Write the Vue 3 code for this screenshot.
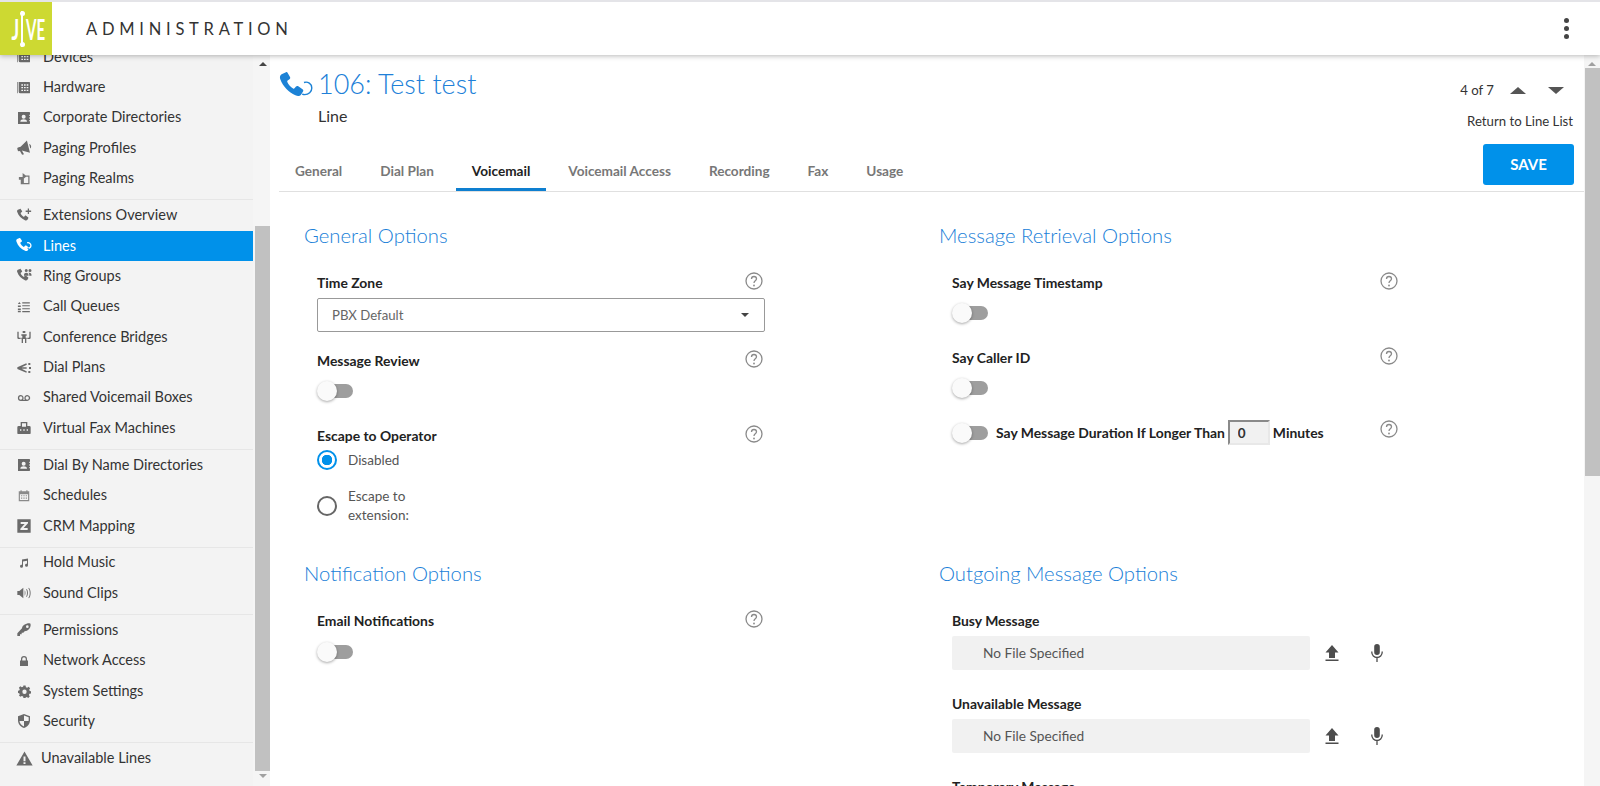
<template>
  <div class="app">
    <header class="topbar">
      <div class="logo">
        <span class="logo-j">J</span>
        <span class="logo-bar"></span>
        <span class="logo-ve">VE</span>
      </div>
      <div class="app-title">ADMINISTRATION</div>
      <div class="kebab"><span></span><span></span><span></span></div>
    </header>

    <div class="layout">
      <aside class="sidebar">
        <nav class="side-list">
          <div v-for="(group, i) in navGroups" :key="i" class="side-group">
            <a
              v-for="item in group"
              :key="item.label"
              class="side-item"
              :class="{ active: item.active, warn: item.icon === 'warning' }"
            >
              <span class="icon-box">
                <svg class="side-icon" :class="'i-' + item.icon" viewBox="0 0 24 24">
                  <path :d="icons[item.icon]" fill="currentColor" fill-rule="evenodd" />
                </svg>
              </span>
              <span class="side-label">{{ item.label }}</span>
            </a>
          </div>
        </nav>
      </aside>
      <div class="scrollbar side-scroll">
        <span class="arrow up"></span>
        <span class="thumb"></span>
        <span class="arrow down"></span>
      </div>

      <main class="main">
        <div class="page-top">
          <div class="page-title">
            <svg class="title-icon" viewBox="0 0 34 28">
              <path d="M7 1.200 2.600 3.200C.8 4.200.6 6.400 1.300 8.300 4 15.500 9.800 21.600 17 24.600c2 .8 4 .4 5.200-1.200l1.800-2.800c.5-.9.300-1.800-.5-2.400l-4.200-3c-.8-.5-1.700-.4-2.300.3l-1.500 1.800c-.4.400-.9.500-1.400.2-2.400-1.500-4.600-3.900-5.800-6.500-.2-.5-.1-1 .3-1.400l1.900-1.400c.7-.6.900-1.500.5-2.300L8.700 1.900C8.300 1.100 7.700 1 7 1.200z" fill="currentColor" />
              <path d="M25 11.500c3.800-1.400 7.800 1.400 7.800 5.400 0 4-3.300 6.700-7 6.700-1 0-1.800-.2-2.600-.5" fill="none" stroke="currentColor" stroke-width="1.400" />
            </svg>
            <div>
              <h1>106: Test test</h1>
              <div class="subtitle">Line</div>
            </div>
          </div>
          <div class="pager-box">
            <div class="pager">
              <span>4 of 7</span>
              <span class="tri tri-up"></span>
              <span class="tri tri-down"></span>
            </div>
            <a class="return-link">Return to Line List</a>
          </div>
        </div>

        <div class="tab-row">
          <div class="tabs">
            <a v-for="tab in tabs" :key="tab" class="tab" :class="{ active: tab === 'Voicemail' }">{{ tab }}</a>
          </div>
          <button class="save" type="button">SAVE</button>
        </div>

        <div class="content">
          <section class="section">
            <h2>General Options</h2>
            <div class="field-head first"><label>Time Zone</label><svg class="help" viewBox="0 0 18 18"><circle cx="9" cy="9" r="8" /><path d="M6.500 7c0-1.500 1.100-2.500 2.500-2.500s2.500 1 2.500 2.300c0 2-2.500 2-2.500 4.200" /><circle class="dot" cx="9" cy="13.500" r=".9" /></svg></div>
            <div class="select">
              <span>PBX Default</span>
              <span class="select-caret"></span>
            </div>
            <div class="field-head gap"><label>Message Review</label><svg class="help" viewBox="0 0 18 18"><circle cx="9" cy="9" r="8" /><path d="M6.500 7c0-1.500 1.100-2.500 2.500-2.500s2.500 1 2.500 2.300c0 2-2.500 2-2.500 4.200" /><circle class="dot" cx="9" cy="13.500" r=".9" /></svg></div>
            <div class="toggle below"><span class="knob"></span></div>
            <div class="field-head after-toggle"><label>Escape to Operator</label><svg class="help" viewBox="0 0 18 18"><circle cx="9" cy="9" r="8" /><path d="M6.500 7c0-1.500 1.100-2.500 2.500-2.500s2.500 1 2.500 2.300c0 2-2.500 2-2.500 4.200" /><circle class="dot" cx="9" cy="13.500" r=".9" /></svg></div>
            <div class="radio-row one">
              <span class="radio checked"></span>
              <span class="radio-label">Disabled</span>
            </div>
            <div class="radio-row two">
              <span class="radio"></span>
              <span class="radio-label">Escape to<br />extension:</span>
            </div>
          </section>

          <section class="section">
            <h2>Message Retrieval Options</h2>
            <div class="field-head first"><label>Say Message Timestamp</label><svg class="help" viewBox="0 0 18 18"><circle cx="9" cy="9" r="8" /><path d="M6.500 7c0-1.500 1.100-2.500 2.500-2.500s2.500 1 2.500 2.300c0 2-2.500 2-2.500 4.200" /><circle class="dot" cx="9" cy="13.500" r=".9" /></svg></div>
            <div class="toggle below"><span class="knob"></span></div>
            <div class="field-head after-toggle"><label>Say Caller ID</label><svg class="help" viewBox="0 0 18 18"><circle cx="9" cy="9" r="8" /><path d="M6.500 7c0-1.500 1.100-2.500 2.500-2.500s2.500 1 2.500 2.300c0 2-2.500 2-2.500 4.200" /><circle class="dot" cx="9" cy="13.500" r=".9" /></svg></div>
            <div class="toggle below"><span class="knob"></span></div>
            <div class="duration-row">
              <div class="toggle"><span class="knob"></span></div>
              <label>Say Message Duration If Longer Than</label>
              <input class="num" type="text" value="0" />
              <label>Minutes</label>
              <svg class="help push" viewBox="0 0 18 18"><circle cx="9" cy="9" r="8" /><path d="M6.500 7c0-1.500 1.100-2.500 2.500-2.500s2.500 1 2.500 2.300c0 2-2.500 2-2.500 4.200" /><circle class="dot" cx="9" cy="13.500" r=".9" /></svg>
            </div>
          </section>

          <section class="section">
            <h2>Notification Options</h2>
            <div class="field-head first"><label>Email Notifications</label><svg class="help" viewBox="0 0 18 18"><circle cx="9" cy="9" r="8" /><path d="M6.500 7c0-1.500 1.100-2.500 2.500-2.500s2.500 1 2.500 2.300c0 2-2.500 2-2.500 4.200" /><circle class="dot" cx="9" cy="13.500" r=".9" /></svg></div>
            <div class="toggle below email"><span class="knob"></span></div>
          </section>

          <section class="section">
            <h2>Outgoing Message Options</h2>
            <template v-for="(msg, i) in messages" :key="msg">
              <div class="field-head" :class="{ first: i === 0 }"><label>{{ msg }}</label></div>
              <div class="file-row">
                <div class="file-box">No File Specified</div>
                <svg class="file-icon upload" viewBox="0 0 16 18"><path d="M8 1 1.500 8.500H5V14h6V8.500h3.500zM1.500 15.400h13V17h-13z" fill="currentColor" /></svg>
                <svg class="file-icon mic" viewBox="0 0 16 18"><path d="M8 0a2.800 2.800 0 0 0-2.800 2.800v5.400a2.800 2.800 0 0 0 5.600 0V2.800A2.800 2.800 0 0 0 8 0z" fill="currentColor" /><path d="M2.800 7.500v.8A5.200 5.200 0 0 0 8 13.500a5.200 5.200 0 0 0 5.200-5.200v-.8M8 13.500V18" fill="none" stroke="currentColor" stroke-width="1.300" /></svg>
              </div>
            </template>
          </section>
        </div>
      </main>
      <div class="scrollbar main-scroll">
        <span class="arrow up"></span>
        <span class="thumb"></span>
      </div>
    </div>
  </div>
</template>

<script setup>
const book = 'M4 3h16a1 1 0 0 1 1 1v15a1 1 0 0 1-1 1H6.500A2.500 2.500 0 0 1 4 17.500zM8 6.500v2h2.500v-2zm4 0v2h2.500v-2zm4 0v2h2.500v-2zM8 10.500v2h2.500v-2zm4 0v2h2.500v-2zm4 0v2h2.500v-2zM8 14.500v2h2.500v-2zm4 0v2h2.500v-2zm4 0v2h2.500v-2zM2 3h1v17H2z'
const contact = 'M3 3h17a1 1 0 0 1 1 1v3h-1v2h1v2h-1v2h1v2h-1v2h1v3a1 1 0 0 1-1 1H3zM11.500 7a3 3 0 1 0 0 6 3 3 0 0 0 0-6zm-5 10.500h10c0-2.500-2.500-3.500-5-3.500s-5 1-5 3.500z'
const handset = 'M6.600 2.500 3.800 3.600C2.700 4.200 2.500 5.500 3 6.800c1.700 5 5.500 9 10.300 11 1.300.5 2.600.3 3.300-.8l1.100-1.900c.3-.6.200-1.200-.3-1.600l-2.700-2c-.5-.4-1.100-.3-1.500.2l-1 1.200c-.3.3-.6.300-.9.100-1.600-1-2.900-2.600-3.700-4.300-.1-.3 0-.7.200-.9l1.300-1c.5-.4.600-1 .3-1.500L7.700 3c-.3-.5-.7-.6-1.100-.5z'

const icons = {
  book,
  contact,
  megaphone: 'M19 2 7.500 9H3.500A1.500 1.500 0 0 0 2 10.500v3A1.500 1.500 0 0 0 3.500 15H5l1.800 6h3L8 15l11 6zm2 6v7c1.500-.7 2-2.200 2-3.500S22.500 8.700 21 8z',
  realm: 'M9 9.500V3l5 4h6v14H6v-7H3V9.500zm2 5v4.500h7V9h-3.500L11 12v2.500z',
  phonePlus: handset + 'M17 2h1.700v2.800h2.800v1.700h-2.800v2.800H17V6.500h-2.800V4.800H17z',
  phone: handset + 'M15.500 7.500a4.200 4.200 0 0 1 5.600 3.900c0 2.600-2.200 4.600-4.800 4.300v-1.600c1.700.3 3.200-1 3.200-2.700 0-1.900-1.900-3.200-3.600-2.500z',
  phoneGroup: handset + 'M15 2.500a2 2 0 1 1 0 4 2 2 0 0 1 0-4zm5 0a2 2 0 1 1 0 4 2 2 0 0 1 0-4zm-8 8c0-2 1.500-3 3-3s3 1 3 3v1h-6zm7-3c1.500 0 3 1 3 3v1h-3v-1c0-1-.3-2.200-1-2.900.3-.1.600-.1 1-.1z',
  queue: 'M4 3.500 6.500 7h-5zM9 4h13v1.800H9zM9 9h13v1.800H9zM1.500 9.500h5V12h-5zM9 14h13v1.800H9zM1.500 14.500h5V17h-5zM9 19h13v1.800H9zM1.500 18.500h5V21h-5z',
  conference: 'M2 4h2v8c0 .5.500 1 1 1h3v2H4c-1 0-2-1-2-2zm20 0v9c0 1-1 2-2 2h-4v-2h3c.5 0 1-.5 1-1V4zM8 8h8v2h-1.500v3H17v2h-1.500v6h-2v-6h-3v6h-2v-6H7v-2h2.500v-3H8zM10 3h4v3h-4z',
  share: 'M2 10.800 15.500 5l.8 2L8.500 11h7.500v2.200H8.500l7.800 4-.8 2L2 13.400zM18.500 4.500h3v3h-3zM19.500 10.500h3v3h-3zM18.500 16.500h3v3h-3z',
  voicemail: 'M6.500 7a5 5 0 0 1 3.900 8h3.200a5 5 0 1 1 3.900 2h-11a5 5 0 0 1 0-10zm0 2.200a2.800 2.800 0 1 0 0 5.600 2.800 2.800 0 0 0 0-5.600zm11 0a2.800 2.800 0 1 0 0 5.600 2.800 2.800 0 0 0 0-5.600z',
  fax: 'M7 3h10v6h3a2 2 0 0 1 2 2v9a1 1 0 0 1-1 1H3a1 1 0 0 1-1-1v-9a2 2 0 0 1 2-2h3zm2 2v5h6V5zM6 14v2h2v-2zm5 0v2h2v-2zm5 0v2h2v-2z',
  calendar: 'M6 2h2v2h8V2h2v2h3v17H3V4h3zM5 9v10h14V9zm2 1.500h2v2H7zm4 0h2v2h-2zm4 0h2v2h-2zM7 14.500h2v2H7zm4 0h2v2h-2zm4 0h2v2h-2z',
  zbox: 'M2 2h20v20H2zm5 4v3h6l-6.500 7V18h11v-3h-6l6.500-7V6z',
  music: 'M8 5 20 3v13.500a3 3 0 1 1-2-2.800V7.500l-8 1.300v9.700a3 3 0 1 1-2-2.800z',
  sound: 'M2 9h3l6-5v16l-6-5H2zM13 8c1.500 1 1.500 7 0 8zM16 6c2.500 2 2.500 10 0 12l-.8-.8c1.800-2 1.800-8.400 0-10.400zM19.300 4c3.500 3 3.500 13 0 16l-.8-.8c2.800-3 2.800-11.400 0-14.400z',
  key: 'M20 2a2 2 0 0 1 2 2c0 5.500-4 9.500-9 9.700L11 16H8.500v2.500H6V21H2v-4l7-7.500C9.500 5.500 14 2 20 2zm-3 3a2 2 0 1 0 0 4 2 2 0 0 0 0-4z',
  lock: 'M12 2a6 6 0 0 1 6 6v3h2v11H4V11h2V8a6 6 0 0 1 6-6zm0 2.500A3.500 3.500 0 0 0 8.500 8v3h7V8A3.500 3.500 0 0 0 12 4.500z',
  gear: 'M10 1h4l.6 3 2.400 1 2.600-1.700 2.800 2.800L20.700 8.700l1 2.300 2.300.6v4l-2.900.5-1 2.400 1.600 2.600-2.800 2.800-2.600-1.700-2.300 1L14 24h-4l-.6-2.800-2.400-1-2.600 1.700-2.800-2.800L3.300 17.500l-1-2.400L0 14.600v-4l2.300-.6 1-2.300L1.600 5.100l2.800-2.800L7 4l2.400-1zM12 8.500a4 4 0 1 0 0 8 4 4 0 0 0 0-8z',
  shield: 'M12 1.500 21 5v6c0 5.500-3.500 9.700-9 11.500C6.500 20.700 3 16.500 3 11V5zm0 2.300V12H5.200c.4 3.900 3 6.800 6.800 8.200V12h6.800c.1-.3.200-.7.200-1V6.400z',
  warning: 'M12 2 23.500 22H.5zm-1.400 7v7h2.800V9zm0 8.300v2.500h2.800v-2.500z',
}

const navGroups = [
  [
    { label: 'Devices', icon: 'book' },
    { label: 'Hardware', icon: 'book' },
    { label: 'Corporate Directories', icon: 'contact' },
    { label: 'Paging Profiles', icon: 'megaphone' },
    { label: 'Paging Realms', icon: 'realm' },
  ],
  [
    { label: 'Extensions Overview', icon: 'phonePlus' },
    { label: 'Lines', icon: 'phone', active: true },
    { label: 'Ring Groups', icon: 'phoneGroup' },
    { label: 'Call Queues', icon: 'queue' },
    { label: 'Conference Bridges', icon: 'conference' },
    { label: 'Dial Plans', icon: 'share' },
    { label: 'Shared Voicemail Boxes', icon: 'voicemail' },
    { label: 'Virtual Fax Machines', icon: 'fax' },
  ],
  [
    { label: 'Dial By Name Directories', icon: 'contact' },
    { label: 'Schedules', icon: 'calendar' },
    { label: 'CRM Mapping', icon: 'zbox' },
  ],
  [
    { label: 'Hold Music', icon: 'music' },
    { label: 'Sound Clips', icon: 'sound' },
  ],
  [
    { label: 'Permissions', icon: 'key' },
    { label: 'Network Access', icon: 'lock' },
    { label: 'System Settings', icon: 'gear' },
    { label: 'Security', icon: 'shield' },
  ],
  [{ label: 'Unavailable Lines', icon: 'warning' }],
]

const tabs = ['General', 'Dial Plan', 'Voicemail', 'Voicemail Access', 'Recording', 'Fax', 'Usage']
const messages = ['Busy Message', 'Unavailable Message', 'Temporary Message']
</script>

<style>
html,
body {
  height: 100%;
  overflow: hidden;
  background: #fff;
}
</style>

<style scoped>
.app {
  height: 786px;
  display: flex;
  flex-direction: column;
  overflow: hidden;
  font-family: Lato, "Open Sans", sans-serif;
  color: #333;
}

.topbar {
  position: relative;
  z-index: 5;
  flex: 0 0 55px;
  display: flex;
  align-items: center;
  box-sizing: border-box;
  background: #fff;
  border-top: 2px solid #e4e4e8;
  box-shadow: 0 1px 5px rgba(0, 0, 0, 0.28);
}

.logo {
  width: 52px;
  height: 53px;
  box-sizing: border-box;
  padding-left: 7px;
  background: #cdd932;
  color: #fff;
  display: flex;
  align-items: center;
  font-size: 29px;
  font-weight: 700;
  margin-right: 34px;
  overflow: hidden;
}

.logo-j {
  width: 12px;
  text-align: right;
  transform: scaleX(0.62);
  transform-origin: right center;
  margin-right: 2px;
}

.logo-ve {
  width: 20px;
  margin-left: 3px;
  white-space: nowrap;
  transform: scaleX(0.52);
  transform-origin: left center;
}

.logo-bar {
  position: relative;
  width: 2px;
  height: 36px;
  background: #fff;
}

.logo-bar::before,
.logo-bar::after {
  content: "";
  position: absolute;
  left: -1.500px;
  width: 5px;
  height: 5px;
  border-radius: 50%;
  background: #fff;
}

.logo-bar::before {
  top: 0;
}

.logo-bar::after {
  bottom: 0;
}

.app-title {
  font-size: 16.500px;
  letter-spacing: 4.750px;
  color: #333;
}

.kebab {
  margin-left: auto;
  margin-right: 31px;
  display: flex;
  flex-direction: column;
  gap: 3px;
}

.kebab span {
  width: 5px;
  height: 5px;
  border-radius: 50%;
  background: #444;
}

.layout {
  flex: 1;
  min-height: 0;
  display: flex;
}

.sidebar {
  width: 253px;
  flex: none;
  background: #f3f3f3;
  overflow: hidden;
}

.side-list {
  margin-top: -13px;
}

.side-group {
  padding-bottom: 5.500px;
  border-bottom: 1.500px solid #e6e6e6;
}

.side-group:last-child {
  border-bottom: none;
}

.side-item {
  display: flex;
  align-items: center;
  gap: 10px;
  height: 30.400px;
  padding-left: 15px;
  font-size: 14.500px;
  color: #333;
}

.side-label {
  padding-bottom: 2px;
}

.side-item.active {
  background: #0091ea;
  color: #fff;
}

.side-item.warn {
  gap: 8px;
}

.icon-box {
  width: 18px;
  height: 18px;
  flex: none;
  display: flex;
  align-items: center;
  justify-content: center;
}

.side-icon {
  width: 16px;
  height: 16px;
  flex: none;
  color: #6a6a6a;
}

.i-phone {
  width: 20px;
  height: 20px;
}

.i-phonePlus,
.i-phoneGroup {
  width: 18px;
  height: 18px;
}

.i-megaphone {
  transform: rotate(-14deg);
}

.i-gear {
  width: 13px;
  height: 13px;
}

.i-lock {
  width: 12px;
  height: 12px;
}

.i-voicemail,
.i-queue,
.i-calendar {
  width: 14px;
  height: 14px;
}

.i-realm {
  width: 15px;
  height: 15px;
  color: #777;
}

.i-music {
  width: 12px;
  height: 12px;
}

.i-calendar {
  color: #8a8a8a;
}

.i-warning {
  width: 17px;
  height: 17px;
}

.active .side-icon {
  color: #fff;
}

.scrollbar {
  flex: none;
  display: flex;
  flex-direction: column;
  align-items: center;
  background: #f5f5f5;
}

.side-scroll {
  width: 17px;
  padding-left: 2px;
  box-sizing: border-box;
}

.side-scroll .thumb {
  margin-top: 160px;
  height: 545px;
}

.main-scroll {
  width: 16px;
}

.main-scroll .thumb {
  height: 408px;
  margin-top: 2px;
}

.thumb {
  display: block;
  width: 15px;
  background: #c1c1c1;
}

.arrow {
  width: 0;
  height: 0;
  border-left: 4px solid transparent;
  border-right: 4px solid transparent;
}

.arrow.up {
  margin-top: 7px;
  border-bottom: 4px solid #444;
}

.main-scroll .arrow.up {
  border-bottom-color: #a0a0a0;
}

.arrow.down {
  margin-top: 3px;
  border-top: 4px solid #a0a0a0;
}

.main {
  flex: 1;
  min-width: 0;
  overflow: hidden;
  padding-left: 9px;
}

.page-top {
  height: 89px;
  box-sizing: border-box;
  padding-right: 11px;
  display: flex;
  justify-content: space-between;
}

.page-title {
  display: flex;
  color: #1c82d6;
}

.title-icon {
  width: 34px;
  height: 28px;
  margin-top: 16px;
  margin-right: 5px;
}

h1 {
  margin: 12px 0 0;
  font-size: 27px;
  line-height: 34px;
  font-weight: 300;
  color: #2080d8;
}

.subtitle {
  margin-top: 5px;
  font-size: 16px;
  line-height: 20px;
  color: #333;
}

.pager-box {
  display: flex;
  flex-direction: column;
  align-items: flex-end;
  font-size: 13.200px;
}

.pager {
  margin-top: 27px;
  display: flex;
  align-items: center;
  height: 16px;
  margin-right: 9px;
}

.tri {
  width: 0;
  height: 0;
  border-left: 8px solid transparent;
  border-right: 8px solid transparent;
}

.tri-up {
  margin-left: 16px;
  border-bottom: 7px solid #555;
}

.tri-down {
  margin-left: 22px;
  border-top: 7px solid #555;
}

.return-link {
  margin-top: 15px;
  line-height: 16px;
}

.tab-row {
  height: 48px;
  box-sizing: border-box;
  padding-right: 10px;
  display: flex;
  justify-content: space-between;
  border-bottom: 1px solid #e0e0e0;
}

.tabs {
  display: flex;
  gap: 6px;
}

.tab {
  padding: 0 16px;
  height: 47px;
  box-sizing: border-box;
  line-height: 55px;
  font-size: 13.600px;
  font-weight: 700;
  color: #777;
}

.tab.active {
  color: #222;
  border-bottom: 3px solid #0e7fd0;
}

.save {
  width: 91px;
  height: 41px;
  padding-bottom: 2px;
  border: none;
  border-radius: 3px;
  background: #0091ea;
  color: #fff;
  font-family: inherit;
  font-size: 15px;
  font-weight: 700;
}

.content {
  display: grid;
  grid-template-columns: 635px 1fr;
  grid-template-rows: 338px auto;
  padding-left: 25px;
}

.section {
  padding-top: 29px;
}

h2 {
  margin: 0;
  font-size: 20.300px;
  line-height: 28px;
  font-weight: 300;
  color: #2080d8;
}

.field-head {
  width: 446px;
  margin-left: 13px;
  height: 18px;
  display: flex;
  justify-content: space-between;
}

.field-head.first {
  margin-top: 25px;
}

.field-head.gap {
  margin-top: 20px;
}

.field-head.after-toggle {
  margin-top: 26px;
}

label {
  font-size: 13.900px;
  font-weight: 700;
  line-height: 18px;
  color: #222;
  white-space: nowrap;
}

.help {
  width: 18px;
  height: 18px;
  flex: none;
  margin-top: -2px;
  fill: none;
  stroke: #8a8a8a;
  stroke-width: 1.300;
}

.help .dot {
  fill: #8a8a8a;
  stroke: none;
}

.select {
  width: 448px;
  height: 34px;
  box-sizing: border-box;
  margin: 6px 0 0 13px;
  padding: 0 15px 0 14px;
  display: flex;
  align-items: center;
  justify-content: space-between;
  border: 1px solid #999;
  border-radius: 2px;
  font-size: 13.200px;
  color: #666;
}

.select-caret {
  border-left: 4px solid transparent;
  border-right: 4px solid transparent;
  border-top: 4px solid #444;
}

.toggle {
  position: relative;
  width: 36px;
  height: 20px;
  flex: none;
}

.toggle.below {
  margin: 11px 0 0 13px;
}

.toggle.below.email {
  margin-top: 12px;
}

.toggle::before {
  content: "";
  position: absolute;
  left: 8px;
  right: 0;
  top: 3px;
  height: 14px;
  border-radius: 7px;
  background: #9e9e9e;
}

.knob {
  position: absolute;
  left: 0;
  top: 0;
  width: 20px;
  height: 20px;
  border-radius: 50%;
  background: #fafafa;
  box-shadow: 0 1px 3px rgba(0, 0, 0, 0.35);
}

.radio-row {
  margin-left: 13px;
  display: flex;
  align-items: center;
  gap: 11px;
}

.radio-row.one {
  margin-top: 5px;
}

.radio-row.two {
  margin-top: 17px;
}

.radio {
  width: 20px;
  height: 20px;
  box-sizing: border-box;
  border: 2px solid #666;
  border-radius: 50%;
  flex: none;
}

.radio.checked {
  border-color: #0091ea;
  background: radial-gradient(circle, #0091ea 0 5px, #fff 5.500px);
}

.radio-label {
  font-size: 13.500px;
  line-height: 19px;
  color: #555;
}

.duration-row {
  width: 446px;
  margin: 22px 0 0 13px;
  height: 25px;
  display: flex;
  align-items: center;
}

.duration-row label:first-of-type {
  margin-left: 8px;
}

.num {
  width: 42px;
  height: 25px;
  box-sizing: border-box;
  margin: 0 3px;
  padding: 0 0 0 8px;
  border: 2px solid;
  border-color: #8a8a8a #e8e8e8 #e8e8e8 #8a8a8a;
  background: #f1f1f1;
  font-family: inherit;
  font-size: 13.500px;
  font-weight: 700;
  color: #333;
}

.help.push {
  align-self: flex-start;
  margin: 0 0 0 auto;
}

.file-row {
  margin: 6px 0 25px 13px;
  height: 34px;
  display: flex;
  align-items: center;
}

.file-box {
  width: 358px;
  height: 34px;
  box-sizing: border-box;
  padding-left: 31px;
  border-radius: 2px;
  background: #f1f1f1;
  font-size: 13.700px;
  line-height: 34px;
  color: #555;
}

.file-icon {
  width: 16px;
  height: 18px;
  color: #4d4d4d;
}

.upload {
  margin-left: 14px;
}

.mic {
  margin-left: 29px;
}
</style>
